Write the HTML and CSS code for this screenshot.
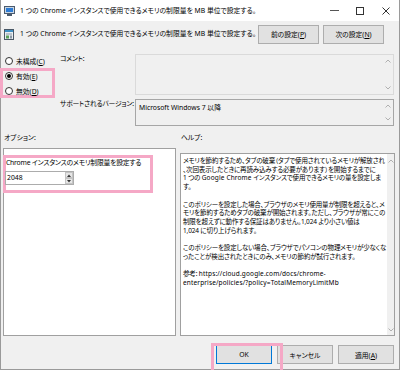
FILE: index.html
```html
<!DOCTYPE html>
<html lang="ja">

<head>
    <meta charset="utf-8">
    <meta name="viewport" content="width=device-width, initial-scale=1.0">
    <title>メモリの制限量</title>
    <link rel="stylesheet" href="styles.css">
</head>

<body>
    <div class="window">
        <header class="titlebar">
            <svg class="app-icon" width="11" height="10" viewBox="0 0 11 10">
                <rect x="0.5" y="0.5" width="10" height="7" fill="#c9d6e3" stroke="#4b5b6e" />
                <rect x="2" y="2" width="7" height="4" fill="#2d7bd4" />
                <rect x="3" y="8" width="5" height="2" fill="#4b5b6e" />
            </svg>
            <span class="title">1 つの Chrome インスタンスで使用できるメモリの制限量を MB 単位で設定する。</span>
            <div class="controls">
                <span class="ctl"><svg width="9" height="9" viewBox="0 0 9 9"><path d="M0 4.5h9" stroke="#555" /></svg></span>
                <span class="ctl"><svg width="8" height="8" viewBox="0 0 8 8"><rect x="0.5" y="0.5" width="7" height="7" fill="none" stroke="#333" /></svg></span>
                <span class="ctl"><svg width="8" height="8" viewBox="0 0 8 8"><path d="M0.5 0.5l7 7M7.5 0.5l-7 7" stroke="#333" /></svg></span>
            </div>
        </header>

        <div class="head">
            <svg class="set-icon" width="10" height="11" viewBox="0 0 10 11">
                <rect x="0.5" y="0.5" width="9" height="10" fill="#e9eef2" stroke="#4a5866" />
                <rect x="1" y="1" width="8" height="2" fill="#3d8fc4" />
                <rect x="2" y="4.5" width="6" height="1" fill="#8a98a6" />
                <rect x="2" y="6.5" width="3" height="3" fill="#5aa05a" />
                <rect x="6" y="6.5" width="2" height="3" fill="#8a98a6" />
            </svg>
            <span class="head-text">1 つの Chrome インスタンスで使用できるメモリの制限量を MB 単位で設定する。</span>
            <div class="nav">
                <button class="btn"><span>前の設定(<u>P</u>)</span></button>
                <button class="btn"><span>次の設定(<u>N</u>)</span></button>
            </div>
        </div>

        <div class="top">
            <div class="radios">
                <label class="radio-row"><span class="radio"></span><span>未構成(<u>C</u>)</span></label>
                <label class="radio-row marked"><span class="radio on"></span><span>有効(<u>E</u>)</span></label>
                <label class="radio-row"><span class="radio"></span><span>無効(<u>D</u>)</span></label>
            </div>
            <div class="fields">
                <span class="field-label">コメント:</span>
                <div class="box">
                    <div class="box-text"></div>
                    <div class="scroll">
                        <svg width="6" height="4" viewBox="0 0 6 4"><path d="M0.5 3.5L3 1l2.5 2.5" fill="none" stroke="#b0b0b0" /></svg>
                        <svg width="6" height="4" viewBox="0 0 6 4"><path d="M0.5 0.5L3 3l2.5-2.5" fill="none" stroke="#b0b0b0" /></svg>
                    </div>
                </div>
                <span class="field-label">サポートされるバージョン:</span>
                <div class="box ro">
                    <div class="box-text">Microsoft Windows 7 以降</div>
                    <div class="scroll">
                        <svg width="6" height="4" viewBox="0 0 6 4"><path d="M0.5 3.5L3 1l2.5 2.5" fill="none" stroke="#b0b0b0" /></svg>
                        <svg width="6" height="4" viewBox="0 0 6 4"><path d="M0.5 0.5L3 3l2.5-2.5" fill="none" stroke="#b0b0b0" /></svg>
                    </div>
                </div>
            </div>
        </div>

        <div class="labels">
            <span>オプション:</span>
            <span>ヘルプ:</span>
        </div>

        <div class="panes">
            <div class="pane options">
                <div class="opt-item">
                    <div class="opt-label">Chrome インスタンスのメモリ制限量を設定する</div>
                    <div class="spin">
                        <span class="spin-val">2048</span>
                        <span class="spin-btns">
                            <span class="spin-btn"><svg width="4" height="3" viewBox="0 0 4 3"><path d="M0 3L2 0.5 4 3z" fill="#333" /></svg></span>
                            <span class="spin-btn"><svg width="4" height="3" viewBox="0 0 4 3"><path d="M0 0L2 2.5 4 0z" fill="#333" /></svg></span>
                        </span>
                    </div>
                </div>
            </div>
            <div class="pane help">
                <p class="help-text">メモリを節約するため、タブの破棄（タブで使用されているメモリが解放され<br>、次回表示したときに再読み込みする必要があります）を開始するまでに<br>1 つの <span class="latin">Google Chrome</span> インスタンスで使用できるメモリの量を設定しま<br>す。<br><br>このポリシーを設定した場合、ブラウザのメモリ使用量が制限を超えると、メ<br>モリを節約するためタブの破棄が開始されます。ただし、ブラウザが常にこの<br>制限を超えずに動作する保証はありません。1,024 より小さい値は<br>1,024 に切り上げられます。<br><br>このポリシーを設定しない場合、ブラウザでパソコンの物理メモリが少なくな<br>ったことが検出されたときにのみ、メモリの節約が試行されます。<br><br>参考: <span class="latin">https://cloud.google.com/docs/chrome-<br>enterprise/policies/?policy=TotalMemoryLimitMb</span></p>
                <div class="scroll">
                    <svg width="6" height="4" viewBox="0 0 6 4"><path d="M0.5 3.5L3 1l2.5 2.5" fill="none" stroke="#b0b0b0" /></svg>
                    <svg width="6" height="4" viewBox="0 0 6 4"><path d="M0.5 0.5L3 3l2.5-2.5" fill="none" stroke="#b0b0b0" /></svg>
                </div>
            </div>
        </div>

        <footer class="footer">
            <button class="btn default marked">OK</button>
            <button class="btn">キャンセル</button>
            <button class="btn"><span>適用(<u>A</u>)</span></button>
        </footer>
    </div>
</body>

</html>
```

FILE: styles.css
```css
* {
    box-sizing: border-box;
}

body {
    margin: 0;
    background: #fff;
    color: #000;
    font-family: "Noto Sans", "Noto Sans CJK JP", sans-serif;
    font-size: 6.8px;
    font-feature-settings: "palt";
}

.window {
    width: 400px;
    height: 370px;
    display: flex;
    flex-direction: column;
    background: #f0f0f0;
    border: 1px solid #9a9a9a;
    border-top: none;
}

/* title bar */
.titlebar {
    height: 21px;
    display: flex;
    align-items: center;
    padding-left: 3px;
    background: #fff;
}

.title {
    margin-left: 5px;
    line-height: 10px;
}

.controls {
    margin-left: auto;
    display: flex;
}

.ctl {
    width: 26px;
    height: 21px;
    display: flex;
    align-items: center;
    justify-content: center;
}

/* setting name + prev/next */
.head {
    height: 26px;
    display: flex;
    align-items: center;
    padding: 0 15px 0 3px;
}

.head-text {
    margin-left: 6px;
    line-height: 10px;
}

.nav {
    margin-left: auto;
    display: flex;
    gap: 4px;
}

.btn {
    height: 19px;
    padding: 0;
    display: flex;
    align-items: center;
    justify-content: center;
    font: inherit;
    color: #000;
    background: #e1e1e1;
    border: 1px solid #adadad;
}

.nav .btn {
    width: 61px;
}

/* radios and info boxes */
.top {
    height: 79px;
    display: flex;
    padding: 7px 5px 0 3px;
}

.radios {
    width: 56px;
    margin-top: -1px;
    display: flex;
    flex-direction: column;
}

.radio-row {
    height: 15px;
    display: flex;
    align-items: center;
    gap: 3px;
    position: relative;
}

.radio {
    width: 8px;
    height: 8px;
    margin-left: 1px;
    border: 1px solid #333;
    border-radius: 50%;
    background: #fff;
    display: flex;
    align-items: center;
    justify-content: center;
}

.radio.on::after {
    content: "";
    width: 4px;
    height: 4px;
    border-radius: 50%;
    background: #000;
}

.radios .marked::after {
    content: "";
    position: absolute;
    left: -4px;
    top: 0;
    width: 49px;
    height: 24px;
    border: 3px solid #f5a8c6;
}

.fields {
    flex: 1;
    display: grid;
    grid-template-columns: 75px 1fr;
    grid-template-rows: 41px 27px;
    row-gap: 4px;
}

.field-label {
    line-height: 9px;
    letter-spacing: -0.2px;
}

.box {
    display: flex;
    background: #f0f0f0;
    border: 1px solid #dadada;
}

.box.ro {
    border-color: #a6a6a6;
}

.box-text {
    flex: 1;
    padding: 3px 3px 0;
    line-height: 10px;
}

.scroll {
    width: 10px;
    display: flex;
    flex-direction: column;
    justify-content: space-between;
    align-items: center;
    padding: 4px 0;
}

.scroll svg {
    display: block;
}

.labels {
    height: 22px;
    display: grid;
    grid-template-columns: 173px 1fr;
    column-gap: 4px;
    align-items: center;
    padding-left: 3px;
}

/* options + help */
.panes {
    height: 188px;
    display: grid;
    grid-template-columns: 173px 215px;
    column-gap: 4px;
    padding-left: 2px;
}

.pane {
    background: #fff;
    border: 1px solid #a0a0a0;
}

.opt-item {
    width: 150px;
    margin: 6px 0 0 -1px;
    padding-bottom: 5px;
    border: 3px solid #f5a8c6;
}

.opt-label {
    line-height: 10px;
    letter-spacing: -0.2px;
}

.spin {
    width: 69px;
    height: 14px;
    margin: 3px 0 0 -1px;
    display: flex;
    background: #fff;
    border: 1px solid #acacac;
}

.spin-val {
    flex: 1;
    padding-left: 1px;
    line-height: 12px;
}

.spin-btns {
    width: 8px;
    display: flex;
    flex-direction: column;
}

.spin-btn {
    flex: 1;
    display: flex;
    align-items: center;
    justify-content: center;
    background: #e6e6e6;
    border: 1px solid #c4c4c4;
}

.spin-btn svg {
    display: block;
}

.help {
    margin-top: 5px;
    display: flex;
}

.help-text {
    flex: 1;
    margin: 0;
    padding: 3px 0 0 2px;
    font-size: 6.5px;
    line-height: 8.7px;
    letter-spacing: -0.15px;
    white-space: nowrap;
    overflow: hidden;
    background: #fff;
}

.help-text .latin {
    letter-spacing: 0.15px;
}

.help .scroll {
    width: 7px;
    padding: 5px 0 3px;
    background: #f0f0f0;
}

/* dialog buttons */
.footer {
    display: flex;
    justify-content: flex-end;
    gap: 5px;
    padding: 9px 5px 0 0;
}

.footer .btn {
    width: 56px;
}

.btn.default {
    border-color: #0078d7;
}

.footer .marked {
    position: relative;
}

.footer .marked::after {
    content: "";
    position: absolute;
    left: -6px;
    top: -3px;
    width: 66px;
    height: 24px;
    border: 3px solid #f5a8c6;
}
```
